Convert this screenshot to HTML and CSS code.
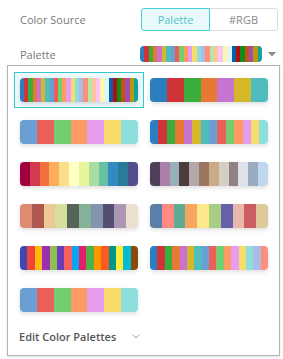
FILE: index.html
```html
<!DOCTYPE html>
<html>
<head>
<meta charset="utf-8">
<link rel="stylesheet" href="styles.css">
</head>
<body>
<div class="editor">
  <div class="row row-source">
    <div class="label">Color Source</div>
    <div class="toggle">
      <div class="tbtn active">Palette</div>
      <div class="tbtn">#RGB</div>
    </div>
  </div>
  <div class="row row-palette">
    <div class="label">Palette</div>
    <div class="preview stripes">
      <i style="background:#2a7fc1"></i><i style="background:#d13438"></i><i style="background:#3aae3c"></i><i style="background:#e67a35"></i><i style="background:#c774d0"></i><i style="background:#d4b82a"></i><i style="background:#4fbcbe"></i><i style="background:#6a9fd4"></i><i style="background:#ea6059"></i><i style="background:#74cd6e"></i><i style="background:#fe9b63"></i><i style="background:#e79ded"></i><i style="background:#f8dc6b"></i><i style="background:#8fdede"></i><i style="background:#a9bce8"></i><i style="background:#ff8f79"></i><i style="background:#b3e8a8"></i><i style="background:#ffc49b"></i><i style="background:#f7c6f2"></i><i style="background:#fff6ae"></i><i style="background:#ddf7f7"></i><i style="background:#0b5ea8"></i><i style="background:#b00e12"></i><i style="background:#0c8f1a"></i><i style="background:#c5520f"></i><i style="background:#a44bb0"></i><i style="background:#b8990b"></i><i style="background:#15a0a0"></i>
    </div>
    <svg class="caret" width="8" height="5" viewBox="0 0 8 5"><path d="M0 0H8L4 4.5Z" fill="#8a8a8a"/></svg>
  </div>
  <div class="panel">
    <div class="grid">
      <div class="item selected"><div class="swatch stripes">
        <i style="background:#2a7fc1"></i><i style="background:#d13438"></i><i style="background:#3aae3c"></i><i style="background:#e67a35"></i><i style="background:#c774d0"></i><i style="background:#d4b82a"></i><i style="background:#4fbcbe"></i><i style="background:#6a9fd4"></i><i style="background:#ea6059"></i><i style="background:#74cd6e"></i><i style="background:#fe9b63"></i><i style="background:#e79ded"></i><i style="background:#f8dc6b"></i><i style="background:#8fdede"></i><i style="background:#a9bce8"></i><i style="background:#ff8f79"></i><i style="background:#b3e8a8"></i><i style="background:#ffc49b"></i><i style="background:#f7c6f2"></i><i style="background:#fff6ae"></i><i style="background:#ddf7f7"></i><i style="background:#0b5ea8"></i><i style="background:#b00e12"></i><i style="background:#0c8f1a"></i><i style="background:#c5520f"></i><i style="background:#a44bb0"></i><i style="background:#b8990b"></i><i style="background:#15a0a0"></i>
      </div></div>
      <div class="item"><div class="swatch stripes">
        <i style="background:#2a7fc1"></i><i style="background:#d13438"></i><i style="background:#3aae3c"></i><i style="background:#e67a35"></i><i style="background:#c774d0"></i><i style="background:#d4b82a"></i><i style="background:#4fbcbe"></i>
      </div></div>
      <div class="item"><div class="swatch stripes">
        <i style="background:#6a9fd4"></i><i style="background:#ea6059"></i><i style="background:#74cd6e"></i><i style="background:#fe9b63"></i><i style="background:#e79ded"></i><i style="background:#f8dc6b"></i><i style="background:#8fdede"></i>
      </div></div>
      <div class="item"><div class="swatch stripes">
        <i style="background:#2a7fc1"></i><i style="background:#d13438"></i><i style="background:#3aae3c"></i><i style="background:#e67a35"></i><i style="background:#c774d0"></i><i style="background:#d4b82a"></i><i style="background:#4fbcbe"></i><i style="background:#6a9fd4"></i><i style="background:#ea6059"></i><i style="background:#74cd6e"></i><i style="background:#fe9b63"></i><i style="background:#e79ded"></i><i style="background:#f8dc6b"></i><i style="background:#8fdede"></i>
      </div></div>
      <div class="item"><div class="swatch stripes">
        <i style="background:#a0003f"></i><i style="background:#d43b4f"></i><i style="background:#f5703f"></i><i style="background:#fcae5d"></i><i style="background:#fcdf8a"></i><i style="background:#ffffc7"></i><i style="background:#e6f59a"></i><i style="background:#abdca4"></i><i style="background:#66c1a4"></i><i style="background:#3489c0"></i><i style="background:#2b7a99"></i><i style="background:#4e4f8c"></i>
      </div></div>
      <div class="item"><div class="swatch stripes">
        <i style="background:#4f3f58"></i><i style="background:#ab7fa8"></i><i style="background:#98b0b9"></i><i style="background:#4c3c3c"></i><i style="background:#b4a7a7"></i><i style="background:#9b7560"></i><i style="background:#c9ac86"></i><i style="background:#d6cec3"></i><i style="background:#8f8280"></i><i style="background:#dde2ea"></i><i style="background:#9aadc0"></i><i style="background:#bed7ee"></i>
      </div></div>
      <div class="item"><div class="swatch stripes">
        <i style="background:#e08a74"></i><i style="background:#ae584f"></i><i style="background:#ecc994"></i><i style="background:#d6df9e"></i><i style="background:#556656"></i><i style="background:#86b199"></i><i style="background:#8495b1"></i><i style="background:#524f70"></i><i style="background:#ac96b1"></i><i style="background:#ebe0cf"></i>
      </div></div>
      <div class="item"><div class="swatch stripes">
        <i style="background:#5b7fa8"></i><i style="background:#fe8a82"></i><i style="background:#5fab94"></i><i style="background:#f6a660"></i><i style="background:#fde88a"></i><i style="background:#a8cd84"></i><i style="background:#6660a8"></i><i style="background:#e9b8ab"></i><i style="background:#cb5d63"></i><i style="background:#dec89c"></i>
      </div></div>
      <div class="item"><div class="swatch stripes">
        <i style="background:#3f48b0"></i><i style="background:#f2453a"></i><i style="background:#fcb813"></i><i style="background:#9d2eb0"></i><i style="background:#8cc152"></i><i style="background:#6b3cb5"></i><i style="background:#f75e5e"></i><i style="background:#05a8f0"></i><i style="background:#e61e68"></i><i style="background:#4caf50"></i><i style="background:#ff9700"></i><i style="background:#ff5722"></i><i style="background:#009688"></i><i style="background:#ffeb3b"></i><i style="background:#00bcd4"></i><i style="background:#8b4a0b"></i>
      </div></div>
      <div class="item"><div class="swatch stripes">
        <i style="background:#2a7fc1"></i><i style="background:#d13438"></i><i style="background:#3aae3c"></i><i style="background:#e67a35"></i><i style="background:#c774d0"></i><i style="background:#d4b82a"></i><i style="background:#4fbcbe"></i><i style="background:#6a9fd4"></i><i style="background:#ea6059"></i><i style="background:#74cd6e"></i><i style="background:#fe9b63"></i><i style="background:#e79ded"></i><i style="background:#f8dc6b"></i><i style="background:#8fdede"></i><i style="background:#a9bce8"></i><i style="background:#ff8f79"></i>
      </div></div>
      <div class="item"><div class="swatch stripes">
        <i style="background:#6a9fd4"></i><i style="background:#ea6059"></i><i style="background:#74cd6e"></i><i style="background:#fe9b63"></i><i style="background:#e79ded"></i><i style="background:#f8dc6b"></i><i style="background:#8fdede"></i>
      </div></div>
    </div>
    <div class="footer">
      <span class="edit">Edit Color Palettes</span>
      <svg class="chev" width="8" height="5" viewBox="0 0 8 5"><path d="M0.5 0.5L4 4L7.5 0.5" fill="none" stroke="#9a9a9a" stroke-width="1"/></svg>
    </div>
  </div>
</div>
</body>
</html>
```

FILE: styles.css
```css
html, body {
  margin: 0;
  padding: 0;
  background: #ffffff;
}
body {
  font-family: "Open Sans", "Liberation Sans", sans-serif;
  font-size: 11px;
  color: #777777;
}
.editor {
  width: 283px;
  height: 359px;
}
.row {
  display: flex;
  align-items: center;
  padding-left: 20px;
}
.row-source {
  padding-top: 8px;
  height: 23px;
}
.row-source .label {
  width: 121px;
}
.row-palette {
  margin-top: 15px;
  height: 16px;
}
.row-palette .label {
  width: 120px;
}
.label {
  color: #7a7a7a;
  font-size: 11px;
}
.toggle {
  display: flex;
  width: 137px;
  height: 23px;
  box-sizing: border-box;
}
.tbtn {
  flex: 1;
  display: flex;
  align-items: center;
  justify-content: center;
  box-sizing: border-box;
  border: 1px solid #dddddd;
  color: #888888;
  font-size: 11px;
}
.tbtn:first-child {
  border-radius: 3px 0 0 3px;
}
.tbtn:last-child {
  border-left: none;
  border-radius: 0 3px 3px 0;
}
.tbtn.active {
  border-color: #45d0d6;
  background: #e9f9fa;
  color: #52c2ca;
}
.stripes {
  display: flex;
  overflow: hidden;
}
.stripes i {
  flex: 1;
  display: block;
}
.preview {
  width: 122px;
  height: 16px;
  border-radius: 4px;
}
.caret {
  margin-left: 6px;
  margin-top: 1px;
}
.panel {
  margin-top: 3px;
  margin-left: 7px;
  width: 273px;
  height: 291px;
  box-sizing: border-box;
  border: 1px solid #b4b4b4;
  padding: 6px 5px 0 6px;
  box-shadow: 0 1px 2px rgba(0,0,0,0.12);
}
.grid {
  display: grid;
  grid-template-columns: 130px 130px;
  row-gap: 6px;
}
.item {
  box-sizing: border-box;
  height: 36px;
  padding: 5px;
  border: 1px solid transparent;
}
.item.selected {
  border-color: #34c9d0;
  background: #edfafb;
}
.swatch {
  width: 118px;
  height: 24px;
  border-radius: 4px;
  box-shadow: 0 2px 4px rgba(0,0,0,0.13);
}
.footer {
  height: 36px;
  display: flex;
  align-items: center;
  padding-left: 5px;
}
.edit {
  font-weight: 600;
  font-size: 11px;
  color: #555555;
}
.chev {
  margin-left: 16px;
}
```
